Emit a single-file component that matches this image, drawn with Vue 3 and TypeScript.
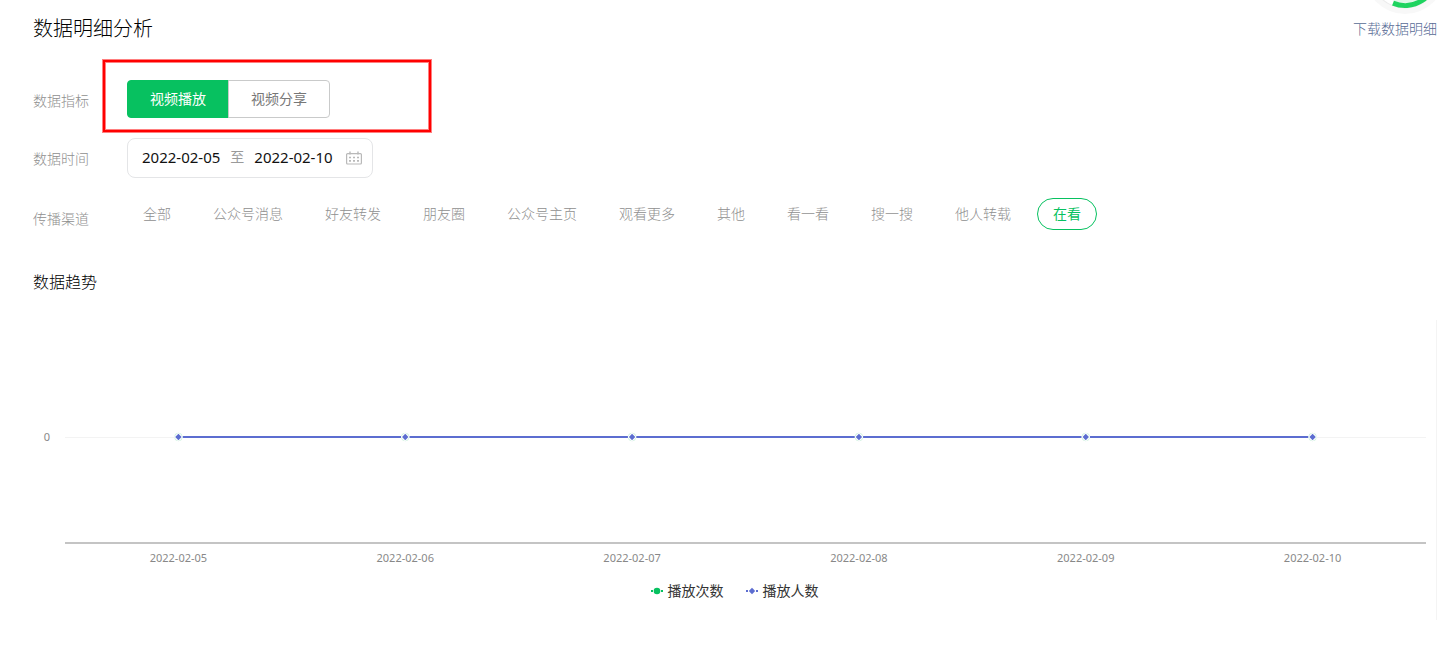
<script setup lang="ts">
import { ref } from 'vue'

const metrics = ['视频播放', '视频分享']
const activeMetric = ref('视频播放')

const channels = [
  '全部', '公众号消息', '好友转发', '朋友圈', '公众号主页', '观看更多',
  '其他', '看一看', '搜一搜', '他人转载', '在看',
]
const activeChannel = ref('在看')

const startDate = '2022-02-05'
const endDate = '2022-02-10'
const days = ['2022-02-05', '2022-02-06', '2022-02-07', '2022-02-08', '2022-02-09', '2022-02-10']

const pointX = (i: number): string => `${((i + 0.5) * 100) / days.length}%`
</script>

<template>
  <main class="page">
    <svg class="ring" width="80" height="16" viewBox="0 0 80 16" aria-hidden="true">
      <circle cx="40" cy="-26" r="40" fill="#f8f8f8" />
      <circle cx="40" cy="-26" r="34.5" fill="#ebebeb" />
      <circle cx="40" cy="-26" r="33.5" fill="#ffffff" />
      <circle cx="40" cy="-26" r="29" fill="#dff7e8" />
      <path d="M28 3.1A31.5 31.5 0 0 0 71.5 -26" fill="none" stroke="#1ed45f" stroke-width="5" />
    </svg>

    <header class="header">
      <h1 class="title">数据明细分析</h1>
      <a class="download" href="#">下载数据明细</a>
    </header>

    <section class="filters">
      <div class="row">
        <span id="metric-label" class="label">数据指标</span>
        <div class="metric-area">
          <div class="segmented" role="group" aria-labelledby="metric-label">
            <button
              v-for="m in metrics"
              :key="m"
              type="button"
              class="segment"
              :class="{ active: m === activeMetric }"
              :aria-pressed="m === activeMetric"
              @click="activeMetric = m"
            >{{ m }}</button>
          </div>
          <div class="highlight"></div>
        </div>
      </div>

      <div class="row">
        <span id="date-label" class="label">数据时间</span>
        <button type="button" class="date-range" aria-labelledby="date-label date-value">
          <span id="date-value" class="dates">
            <span>{{ startDate }}</span>
            <span class="to">至</span>
            <span>{{ endDate }}</span>
          </span>
          <svg class="calendar" width="16" height="14" viewBox="0 0 16 14" aria-hidden="true">
            <rect x="0.6" y="2.6" width="14.8" height="10.4" rx="1" fill="none" stroke="#b9b9b9" stroke-width="1.2" />
            <path d="M4 0.5v3M12 0.5v3" stroke="#b9b9b9" stroke-width="1.4" />
            <path d="M3 6.5h2M7 6.5h2M11 6.5h2M3 9.9h2M7 9.9h2M11 9.9h2" stroke="#b9b9b9" stroke-width="1.6" />
          </svg>
        </button>
      </div>

      <div class="row">
        <span id="channel-label" class="label">传播渠道</span>
        <div class="channels" role="group" aria-labelledby="channel-label">
          <button
            v-for="c in channels"
            :key="c"
            type="button"
            class="chip"
            :class="{ active: c === activeChannel }"
            :aria-pressed="c === activeChannel"
            @click="activeChannel = c"
          >{{ c }}</button>
        </div>
      </div>
    </section>

    <h2 class="subtitle">数据趋势</h2>

    <section class="chart">
      <div class="plot-row">
        <span class="y-label">0</span>
        <svg class="plot" width="100%" height="214" aria-hidden="true">
          <rect x="0" y="107" width="100%" height="1" fill="#f3f3f3" />
          <rect x="0" y="212" width="100%" height="2" fill="#c4c4c4" />
          <line :x1="pointX(0)" y1="107" :x2="pointX(days.length - 1)" y2="107" stroke="#5c6dd0" stroke-width="2" />
          <svg v-for="(d, i) in days" :key="d" :x="pointX(i)" y="107" class="marker">
            <circle r="4" fill="#ffffff" />
            <circle r="3.8" fill="none" stroke="#cdf2de" stroke-width="1" />
            <path d="M0 -4.4L4.4 0L0 4.4L-4.4 0Z" fill="#ffffff" />
            <path d="M0 -3.2L3.2 0L0 3.2L-3.2 0Z" fill="#5c6dd0" />
          </svg>
        </svg>
      </div>
      <div class="x-labels">
        <span v-for="d in days" :key="d">{{ d }}</span>
      </div>
      <div class="legend">
        <span class="legend-item">
          <svg width="12" height="8" viewBox="0 0 12 8" aria-hidden="true">
            <path d="M0 4h2M10 4h2" stroke="#07c160" stroke-width="2" />
            <circle cx="6" cy="4" r="3.3" fill="#07c160" />
          </svg>
          播放次数
        </span>
        <span class="legend-item">
          <svg width="12" height="8" viewBox="0 0 12 8" aria-hidden="true">
            <path d="M0 4h2M10 4h2" stroke="#5c6dd0" stroke-width="2" />
            <path d="M6 0.8L9.2 4L6 7.2L2.8 4Z" fill="#5c6dd0" />
          </svg>
          播放人数
        </span>
      </div>
    </section>
  </main>
</template>

<style>
body {
  margin: 0;
  background: #ffffff;
}
</style>

<style scoped>
.page {
  position: relative;
  padding: 14px 14px 32px 33px;
  font-family: "Noto Sans", "Noto Sans CJK SC", sans-serif;
  font-size: 14px;
  line-height: 22px;
  color: #888888;
}

button {
  margin: 0;
  font: inherit;
  cursor: pointer;
}

.ring {
  position: absolute;
  top: 0;
  right: 6px;
}

.header {
  display: flex;
  justify-content: space-between;
  align-items: center;
}

.title {
  margin: 0;
  font-size: 20px;
  line-height: 30px;
  font-weight: 300;
  color: #000000;
}

.download {
  color: #576b95;
  font-weight: 300;
  text-decoration: none;
}

.filters {
  display: flex;
  flex-direction: column;
  gap: 20px;
  margin-top: 36px;
}

.row {
  display: flex;
  align-items: flex-start;
}

.label {
  flex: none;
  width: 94px;
  padding-top: 10px;
  color: #8f8f8f;
  font-weight: 300;
}

.metric-area {
  position: relative;
}

.segmented {
  display: flex;
}

.segment {
  height: 38px;
  padding: 0 22px;
  border: 1px solid #c9caca;
  border-radius: 0 4px 4px 0;
  background: #ffffff;
  color: #777777;
}

.segment + .segment {
  margin-left: -1px;
}

.segment.active {
  border-color: #07c160;
  border-radius: 4px 0 0 4px;
  background: #07c160;
  color: #ffffff;
}

.highlight {
  position: absolute;
  top: -20px;
  left: -24px;
  box-sizing: border-box;
  width: 328px;
  height: 72px;
  border: 2px solid #ff0000;
  box-shadow: 0 0 0 1px rgba(255, 0, 0, 0.5), inset 0 0 0 1px rgba(255, 0, 0, 0.5);
  pointer-events: none;
}

.date-range {
  display: flex;
  align-items: center;
  gap: 13px;
  height: 40px;
  padding: 0 10px 0 14px;
  border: 1px solid #e4e5e7;
  border-radius: 8px;
  background: #ffffff;
}

.dates {
  display: flex;
  gap: 10px;
  padding-bottom: 2px;
  font-size: 15px;
  color: #111111;
}

.to {
  font-size: 14px;
  color: #9a9a9a;
}

.channels {
  display: flex;
  flex-wrap: wrap;
  gap: 10px;
}

.chip {
  height: 32px;
  padding: 0 15px;
  border: 1px solid transparent;
  border-radius: 16px;
  background: transparent;
  color: #8f8f8f;
  font-weight: 300;
}

.chip.active {
  border-color: #07c160;
  color: #07c160;
  font-weight: 400;
}

.subtitle {
  margin: 40px 0 0;
  font-size: 16px;
  line-height: 24px;
  font-weight: 300;
  color: #000000;
}

.chart {
  box-sizing: border-box;
  height: 300px;
  margin-top: 26px;
  padding-top: 10px;
  border-right: 1px solid #f4f4f4;
}

.plot-row {
  display: flex;
  align-items: center;
  margin-right: 10px;
}

.y-label {
  flex: none;
  width: 17px;
  margin-right: 15px;
  font-size: 11px;
  text-align: right;
}

.plot {
  flex: 1;
  min-width: 0;
}

.marker {
  overflow: visible;
}

.x-labels {
  display: grid;
  grid-template-columns: repeat(6, 1fr);
  margin: 4px 10px 0 32px;
  font-size: 11px;
  line-height: 20px;
  text-align: center;
}

.legend {
  display: flex;
  justify-content: center;
  gap: 22px;
  margin-top: 12px;
  color: #333333;
}

.legend-item {
  display: flex;
  align-items: center;
  gap: 5px;
}
</style>
